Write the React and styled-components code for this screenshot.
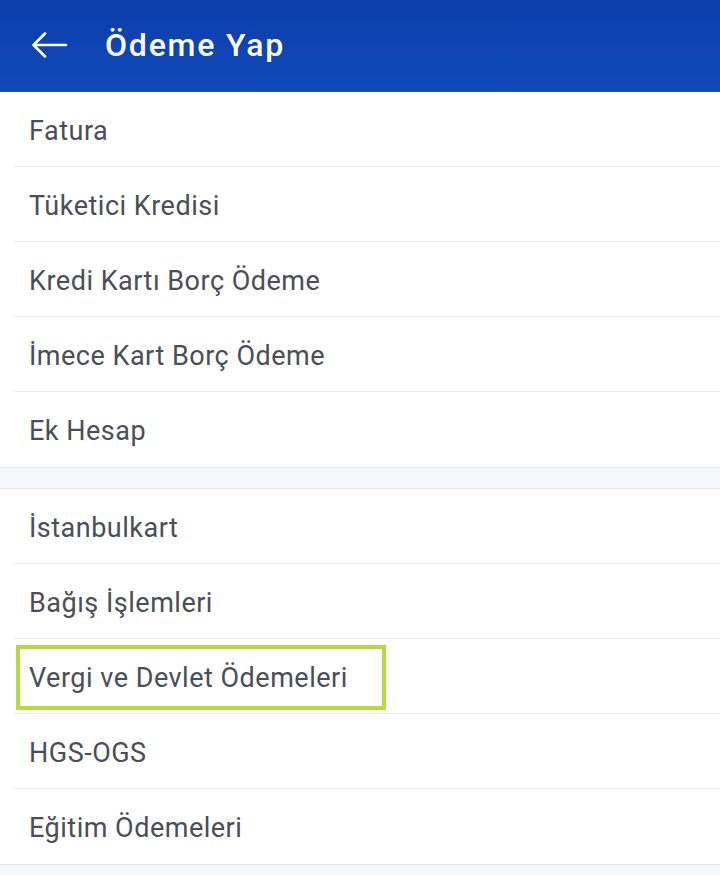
import React from "react"
import styled, { createGlobalStyle } from "styled-components"

const GlobalStyle = createGlobalStyle`
  * {
    box-sizing: border-box;
  }

  body {
    margin: 0;
    background: #ffffff;
    font-family: Roboto, "Noto Sans", "Liberation Sans", sans-serif;
  }
`

const Page = styled.div`
  width: 720px;
  height: 875px;
  overflow: hidden;
  background: #f6f8fb;
`

const Header = styled.header`
  height: 92px;
  display: flex;
  align-items: center;
  padding: 0 0 2px 29px;
  background: linear-gradient(180deg, #0c3ead 0%, #1049b9 100%);
  border-bottom: 1px solid #2d5696;
`

const BackButton = styled.button`
  display: flex;
  align-items: center;
  justify-content: center;
  width: 40px;
  height: 40px;
  padding: 0;
  margin-right: 36px;
  border: none;
  background: none;
  cursor: pointer;
`

const Title = styled.h1`
  margin: 0;
  color: #ffffff;
  font-size: 32px;
  font-weight: 500;
  letter-spacing: 1.8px;
`

const Group = styled.ul`
  margin: 0;
  padding: 0 0 0 14px;
  list-style: none;
  background: #ffffff;
  border-bottom: 1px solid #e6e8ec;
`

const Spacer = styled.div`
  height: 21px;
  background: #f6f8fb;
  border-bottom: 1px solid #e6e8ec;
`

const Row = styled.li`
  position: relative;
  height: 75px;
  display: flex;
  align-items: center;
  padding: 3px 0 0 15px;
  border-bottom: 1px solid #e9ebee;
  color: #4a4e56;
  font-size: 27px;
  letter-spacing: 0.5px;

  &:last-child {
    border-bottom: none;
  }
`

const Highlight = styled.span`
  position: absolute;
  left: 2px;
  top: 6px;
  width: 370px;
  height: 65px;
  border: 4px solid #b5dc3b;
  pointer-events: none;
`

const firstGroup = [
  "Fatura",
  "Tüketici Kredisi",
  "Kredi Kartı Borç Ödeme",
  "İmece Kart Borç Ödeme",
  "Ek Hesap",
]

const secondGroup = [
  "İstanbulkart",
  "Bağış İşlemleri",
  "Vergi ve Devlet Ödemeleri",
  "HGS-OGS",
  "Eğitim Ödemeleri",
]

const highlighted = "Vergi ve Devlet Ödemeleri"

const ArrowIcon = () => (
  <svg width="38" height="32" viewBox="0 0 38 32" fill="none">
    <path
      d="M36 16H4M15 4.5L3.5 16L15 27.5"
      stroke="#ffffff"
      strokeWidth="2.6"
      strokeLinecap="round"
      strokeLinejoin="round"
    />
  </svg>
)

const App = () => (
  <Page>
    <GlobalStyle />
    <Header>
      <BackButton aria-label="Geri">
        <ArrowIcon />
      </BackButton>
      <Title>Ödeme Yap</Title>
    </Header>

    <Group>
      {firstGroup.map(item => (
        <Row key={item}>{item}</Row>
      ))}
    </Group>

    <Spacer />

    <Group>
      {secondGroup.map(item => (
        <Row key={item}>
          {item}
          {item === highlighted && <Highlight />}
        </Row>
      ))}
    </Group>
  </Page>
)

export default App
